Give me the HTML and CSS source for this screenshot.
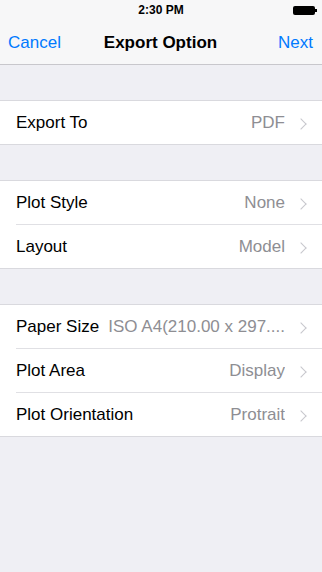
FILE: index.html
```html
<!DOCTYPE html>
<html>
<head>
    <meta charset="utf-8" />
    <title>Export Option</title>
    <link rel="stylesheet" href="styles.css">
</head>
<body>
    <div class="top">
        <div class="status">
            <span class="time">2:30 PM</span>
            <span class="battery"><i></i></span>
        </div>
        <div class="nav">
            <a href="javascript:;" class="nav-btn">Cancel</a>
            <span class="nav-title">Export Option</span>
            <a href="javascript:;" class="nav-btn">Next</a>
        </div>
    </div>

    <ul class="group">
        <li><span class="label">Export To</span><span class="value">PDF</span><span class="chev"></span></li>
    </ul>

    <ul class="group">
        <li><span class="label">Plot Style</span><span class="value">None</span><span class="chev"></span></li>
        <li><span class="label">Layout</span><span class="value">Model</span><span class="chev"></span></li>
    </ul>

    <ul class="group">
        <li><span class="label">Paper Size</span><span class="value">ISO A4(210.00 x 297....</span><span class="chev"></span></li>
        <li><span class="label">Plot Area</span><span class="value">Display</span><span class="chev"></span></li>
        <li><span class="label">Plot Orientation</span><span class="value">Protrait</span><span class="chev"></span></li>
    </ul>
</body>
</html>
```

FILE: styles.css
```css
body {
    margin: 0;
    padding: 0;
    background: #efeff4;
    font: 17px/1.2 "Liberation Sans", Arial, sans-serif;
    color: #000;
}

ul, li {
    margin: 0;
    padding: 0;
    list-style: none;
}

.top {
    background: #f7f7f8;
    border-bottom: 1px solid #c8c7cc;
}

.status {
    height: 20px;
    padding-top: 1px;
    box-sizing: border-box;
    display: flex;
    align-items: center;
    justify-content: center;
    position: relative;
}

    .status .time {
        font-size: 12px;
        font-weight: bold;
    }

    .status .battery {
        position: absolute;
        right: 7px;
        top: 6px;
        width: 22px;
        height: 9px;
        background: #000;
        border-radius: 2px;
    }

        .status .battery i {
            position: absolute;
            right: -2px;
            top: 3px;
            width: 2px;
            height: 3px;
            background: #000;
        }

.nav {
    height: 44px;
    padding: 2px 9px 0 8px;
    box-sizing: border-box;
    display: flex;
    align-items: center;
    justify-content: space-between;
}

    .nav .nav-btn {
        color: #007aff;
        text-decoration: none;
        width: 80px;
    }

        .nav .nav-btn:last-child {
            text-align: right;
        }

    .nav .nav-title {
        font-weight: bold;
    }

.group {
    margin-top: 35px;
    background: #fff;
    border-top: 1px solid #d9d9de;
    border-bottom: 1px solid #d9d9de;
}

    .group li {
        height: 44px;
        box-sizing: border-box;
        padding: 2px 14px 0 0;
        margin-left: 16px;
        display: flex;
        align-items: center;
        border-bottom: 1px solid #e0e0e4;
        white-space: nowrap;
    }

        .group li:last-child {
            border-bottom: none;
            height: 43px;
        }

    .group .label {
        flex: none;
        padding-right: 6px;
    }

    .group .value {
        flex: 1;
        min-width: 0;
        overflow: hidden;
        text-align: right;
        color: #8e8e93;
    }

    .group .chev {
        flex: none;
        width: 7px;
        height: 7px;
        margin-left: 12px;
        margin-right: 3px;
        border-top: 1.5px solid #c7c7cc;
        border-right: 1.5px solid #c7c7cc;
        transform: rotate(45deg);
    }
```
